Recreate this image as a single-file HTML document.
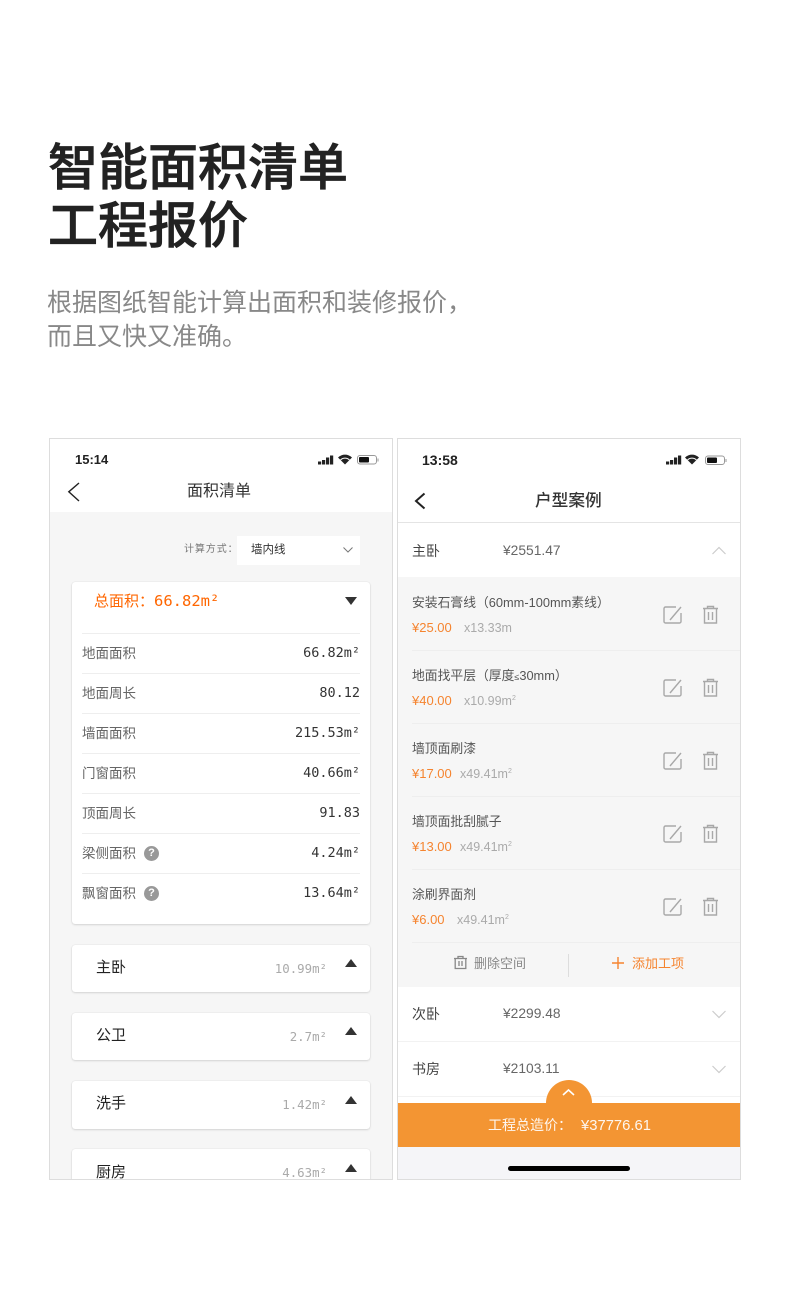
<!DOCTYPE html>
<html lang="zh"><head><meta charset="utf-8"><title>智能面积清单</title>
<style>
html,body{margin:0;padding:0;background:#fff}
body{position:relative;width:790px;height:1290px;overflow:hidden;font-family:"Liberation Sans","Noto Sans CJK SC",sans-serif}
.a,.t,.r,svg,.l{position:absolute}
.t{white-space:nowrap;height:20px;line-height:20px;margin-top:-10px}
.r{white-space:nowrap;height:20px;line-height:20px;margin-top:-10px;text-align:right}
.m{font-family:"DejaVu Sans Mono","Noto Sans CJK SC",monospace}
.c{background:#fff;border-radius:3px;box-shadow:0 1px 2px rgba(0,0,0,.12),0 0 1px rgba(0,0,0,.16);left:72px;width:298px}
.l{height:1px;background:#eee}
.lab{left:82px;font-size:13.5px;color:#666;margin-top:-9px}
.val{right:430px;font-size:13.5px;color:#333}
.nm{left:96px;font-size:15px;color:#222}
.rv{right:463px;font-size:12.4px;color:#aaa}
.n2{left:412px;font-size:14px;color:#444}
.p2{left:503px;font-size:13.8px;color:#666}
.i2{left:412px;font-size:12.8px;color:#555;margin-top:-9px}
.o2{left:412px;font-size:13px;color:#f5842f}
.q2{font-size:12.5px;color:#aaa}
.ic{left:662px;fill:none;stroke:#a8a8a8;stroke-width:1.400}
sup{font-size:7px;line-height:0}
</style></head><body>
<div class="a" style="left:48px;top:139px;font-size:50px;line-height:58px;font-weight:500;-webkit-text-stroke:.7px #222;color:#222;white-space:nowrap">智能面积清单<br>工程报价</div>
<div class="a" style="left:47px;top:286px;font-size:25px;line-height:34px;color:#888;white-space:nowrap">根据图纸智能计算出面积和装修报价，<br>而且又快又准确。</div>

<!-- left phone -->
<div class="a" style="left:49px;top:438px;width:342px;height:740px;border:1px solid #ddd;background:#f6f6f6;overflow:hidden"></div>
<div class="a" style="left:50px;top:439px;width:342px;height:73px;background:#fff"></div>
<div class="t" style="left:75px;top:460px;font-size:13px;font-weight:700;color:#222">15:14</div>
<svg style="left:318px;top:454px" width="18" height="12"><path fill="#222" d="M0 7.500h3.200v3H0zM4 6h3.200v4.500H4zM8 3.500h3.200v7H8zM12 1.500h3.200v9H12z"/></svg>
<svg style="left:338px;top:454px" width="15" height="12"><path fill="#222" d="M7 10.500 0 3.500C4-.4 10-.4 14 3.500z"/><path fill="none" stroke="#fff" stroke-width="1" d="M2.500 6c2.500-2.500 6.500-2.500 9 0"/></svg>
<svg style="left:357px;top:454px" width="23" height="12"><rect x=".5" y="1.500" width="19" height="8.500" rx="2.500" fill="none" stroke="#999"/><rect x="2" y="3" width="10" height="5.500" rx="1" fill="#111"/><rect x="20.500" y="4.500" width="1" height="3" fill="#999"/></svg>
<svg style="left:66px;top:481px" width="16" height="22" fill="none" stroke="#222" stroke-width="1.400"><path d="M13 2 2.800 10.800 13 20"/></svg>
<div class="t" style="left:187px;top:492px;font-size:16px;color:#333">面积清单</div>

<div class="t" style="left:184px;top:550px;font-size:10px;color:#777;letter-spacing:.9px">计算方式：</div>
<div class="a" style="left:237px;top:536px;width:123px;height:29px;background:#fff"></div>
<div class="t" style="left:251px;top:550px;font-size:11.500px;color:#333">墙内线</div>
<svg style="left:342px;top:546px" width="12" height="8" fill="none" stroke="#777"><path d="M1.500 1.500 6 6l4.500-4.500"/></svg>

<div class="a c" style="top:582px;height:342px"></div>
<div class="t m" style="left:94px;top:601px;color:#f60"><span style="font-size:15px">总面积：</span><span style="font-size:15.500px">66.82m²</span></div>
<svg style="left:345px;top:597px" width="12" height="8"><path fill="#333" d="M0 0h12L6 8z"/></svg>
<div class="l" style="left:82px;top:633px;width:278px"></div>
<div class="l" style="left:82px;top:673px;width:278px"></div>
<div class="l" style="left:82px;top:713px;width:278px"></div>
<div class="l" style="left:82px;top:753px;width:278px"></div>
<div class="l" style="left:82px;top:793px;width:278px"></div>
<div class="l" style="left:82px;top:833px;width:278px"></div>
<div class="l" style="left:82px;top:873px;width:278px"></div>
<div class="t lab" style="top:653px">地面面积</div><div class="r m val" style="top:653px">66.82m²</div>
<div class="t lab" style="top:693px">地面周长</div><div class="r m val" style="top:693px">80.12</div>
<div class="t lab" style="top:733px">墙面面积</div><div class="r m val" style="top:733px">215.53m²</div>
<div class="t lab" style="top:773px">门窗面积</div><div class="r m val" style="top:773px">40.66m²</div>
<div class="t lab" style="top:813px">顶面周长</div><div class="r m val" style="top:813px">91.83</div>
<div class="t lab" style="top:853px">梁侧面积</div><div class="r m val" style="top:853px">4.24m²</div>
<div class="t lab" style="top:893px">飘窗面积</div><div class="r m val" style="top:893px">13.64m²</div>
<div class="a" style="left:144px;top:846px;width:15px;height:15px;border-radius:50%;background:#999;color:#fff;font-size:11px;font-weight:700;line-height:15px;text-align:center">?</div>
<div class="a" style="left:144px;top:886px;width:15px;height:15px;border-radius:50%;background:#999;color:#fff;font-size:11px;font-weight:700;line-height:15px;text-align:center">?</div>

<div class="a c" style="top:945px;height:47px"></div>
<div class="t nm" style="top:968px">主卧</div><div class="r m rv" style="top:969px">10.99m²</div>
<svg style="left:345px;top:959px" width="12" height="8"><path fill="#333" d="M6 0l6 8H0z"/></svg>
<div class="a c" style="top:1013px;height:47px"></div>
<div class="t nm" style="top:1036px">公卫</div><div class="r m rv" style="top:1037px">2.7m²</div>
<svg style="left:345px;top:1027px" width="12" height="8"><path fill="#333" d="M6 0l6 8H0z"/></svg>
<div class="a c" style="top:1081px;height:48px"></div>
<div class="t nm" style="top:1104px">洗手</div><div class="r m rv" style="top:1105px">1.42m²</div>
<svg style="left:345px;top:1096px" width="12" height="8"><path fill="#333" d="M6 0l6 8H0z"/></svg>
<div class="a" style="left:50px;top:1140px;width:342px;height:39px;overflow:hidden">
<div class="a c" style="left:22px;top:9px;height:48px"></div>
<div class="t nm" style="left:46px;top:33px">厨房</div><div class="r m rv" style="right:65px;top:33px">4.63m²</div>
<svg style="left:295px;top:24px" width="12" height="8"><path fill="#333" d="M6 0l6 8H0z"/></svg>
</div>

<!-- right phone -->
<div class="a" style="left:397px;top:438px;width:342px;height:740px;border:1px solid #ddd;background:#fff"></div>
<div class="t" style="left:422px;top:460px;font-size:14px;font-weight:700;color:#222">13:58</div>
<svg style="left:666px;top:454px" width="18" height="12"><path fill="#222" d="M0 7.500h3.200v3H0zM4 6h3.200v4.500H4zM8 3.500h3.200v7H8zM12 1.500h3.200v9H12z"/></svg>
<svg style="left:685px;top:454px" width="15" height="12"><path fill="#222" d="M7 10.500 0 3.500C4-.4 10-.4 14 3.500z"/><path fill="none" stroke="#fff" stroke-width="1" d="M2.500 6c2.500-2.500 6.500-2.500 9 0"/></svg>
<svg style="left:704px;top:454px" width="24" height="12"><rect x="1.500" y="2" width="19" height="8.500" rx="2.500" fill="none" stroke="#999"/><rect x="3" y="3.500" width="10" height="5.500" rx="1" fill="#111"/><rect x="21.500" y="5" width="1" height="3" fill="#999"/></svg>
<svg style="left:412px;top:491px" width="16" height="20" fill="none" stroke="#222" stroke-width="2"><path d="M12.500 2.500 4 10l8.500 7.500"/></svg>
<div class="t" style="left:535px;top:501px;font-size:16.700px;font-weight:500;color:#333">户型案例</div>
<div class="l" style="left:398px;top:522px;width:342px;background:#e4e4e4"></div>
<div class="t n2" style="top:551px">主卧</div><div class="t p2" style="top:551px">¥2551.47</div>
<svg style="left:711px;top:545px" width="16" height="11" fill="none" stroke="#ccc" stroke-width="1.200"><path d="M1.500 9 8 2.500 14.500 9"/></svg>
<div class="a" style="left:398px;top:577px;width:342px;height:410px;background:#f6f6f6"></div>

<div class="t i2" style="top:602px">安装石膏线（60mm-100mm素线）</div>
<div class="t o2" style="top:628px">¥25.00</div><div class="t q2" style="left:464px;top:628px">x13.33m</div>
<div class="l" style="left:412px;top:650px;width:328px"></div>
<div class="t i2" style="top:675px">地面找平层（厚度<span style="font-size:9px">≤</span>30mm）</div>
<div class="t o2" style="top:701px">¥40.00</div><div class="t q2" style="left:464px;top:701px">x10.99m<sup>2</sup></div>
<div class="l" style="left:412px;top:723px;width:328px"></div>
<div class="t i2" style="top:748px">墙顶面刷漆</div>
<div class="t o2" style="top:774px">¥17.00</div><div class="t q2" style="left:460px;top:774px">x49.41m<sup>2</sup></div>
<div class="l" style="left:412px;top:796px;width:328px"></div>
<div class="t i2" style="top:821px">墙顶面批刮腻子</div>
<div class="t o2" style="top:847px">¥13.00</div><div class="t q2" style="left:460px;top:847px">x49.41m<sup>2</sup></div>
<div class="l" style="left:412px;top:869px;width:328px"></div>
<div class="t i2" style="top:894px">涂刷界面剂</div>
<div class="t o2" style="top:920px">¥6.00</div><div class="t q2" style="left:457px;top:920px">x49.41m<sup>2</sup></div>
<div class="l" style="left:412px;top:942px;width:328px"></div>

<svg class="ic" style="top:605px" width="60" height="20"><path d="M14 2H3.500A1.500 1.500 0 0 0 2 3.500v13A1.500 1.500 0 0 0 3.500 18h14a1.500 1.500 0 0 0 1.500-1.500V8M8 15 19 2"/><path d="M41 3.500h15M45.500 3.500V1.500h6v2M42.500 3.500V18h12V3.500M46.500 7v8M50.500 7v8"/></svg>
<svg class="ic" style="top:678px" width="60" height="20"><path d="M14 2H3.500A1.500 1.500 0 0 0 2 3.500v13A1.500 1.500 0 0 0 3.500 18h14a1.500 1.500 0 0 0 1.500-1.500V8M8 15 19 2"/><path d="M41 3.500h15M45.500 3.500V1.500h6v2M42.500 3.500V18h12V3.500M46.500 7v8M50.500 7v8"/></svg>
<svg class="ic" style="top:751px" width="60" height="20"><path d="M14 2H3.500A1.500 1.500 0 0 0 2 3.500v13A1.500 1.500 0 0 0 3.500 18h14a1.500 1.500 0 0 0 1.500-1.500V8M8 15 19 2"/><path d="M41 3.500h15M45.500 3.500V1.500h6v2M42.500 3.500V18h12V3.500M46.500 7v8M50.500 7v8"/></svg>
<svg class="ic" style="top:824px" width="60" height="20"><path d="M14 2H3.500A1.500 1.500 0 0 0 2 3.500v13A1.500 1.500 0 0 0 3.500 18h14a1.500 1.500 0 0 0 1.500-1.500V8M8 15 19 2"/><path d="M41 3.500h15M45.500 3.500V1.500h6v2M42.500 3.500V18h12V3.500M46.500 7v8M50.500 7v8"/></svg>
<svg class="ic" style="top:897px" width="60" height="20"><path d="M14 2H3.500A1.500 1.500 0 0 0 2 3.500v13A1.500 1.500 0 0 0 3.500 18h14a1.500 1.500 0 0 0 1.500-1.500V8M8 15 19 2"/><path d="M41 3.500h15M45.500 3.500V1.500h6v2M42.500 3.500V18h12V3.500M46.500 7v8M50.500 7v8"/></svg>

<svg style="left:453px;top:955px" width="16" height="16" fill="none" stroke="#888" stroke-width="1.300"><path d="M1 3.500h13M5 3.500V1.500h5v2M2.200 3.500v10h10.600v-10M6 6v5M9 6v5"/></svg>
<div class="t" style="left:474px;top:964px;font-size:13px;color:#888">删除空间</div>
<div class="a" style="left:568px;top:954px;width:1px;height:23px;background:#ddd"></div>
<svg style="left:612px;top:957px" width="13" height="13" stroke="#f5842f" stroke-width="1.400"><path d="M6 0v12M0 6h12"/></svg>
<div class="t" style="left:632px;top:964px;font-size:13px;color:#f5842f">添加工项</div>

<div class="t n2" style="top:1014px">次卧</div><div class="t p2" style="top:1014px">¥2299.48</div>
<svg style="left:711px;top:1009px" width="16" height="11" fill="none" stroke="#ccc" stroke-width="1.200"><path d="M1.500 2 8 8.500 14.500 2"/></svg>
<div class="l" style="left:398px;top:1041px;width:342px;background:#f2f2f2"></div>
<div class="t n2" style="top:1069px">书房</div><div class="t p2" style="top:1069px">¥2103.11</div>
<svg style="left:711px;top:1064px" width="16" height="11" fill="none" stroke="#ccc" stroke-width="1.200"><path d="M1.500 2 8 8.500 14.500 2"/></svg>
<div class="l" style="left:398px;top:1096px;width:342px;background:#f2f2f2"></div>
<div class="a" style="left:546px;top:1080px;width:46px;height:46px;border-radius:50%;background:#f39533"></div>
<svg style="left:561px;top:1087px" width="15" height="10" fill="none" stroke="#fff" stroke-width="1.600"><path d="M2 8l5.500-5L13 8"/></svg>
<div class="a" style="left:398px;top:1103px;width:342px;height:44px;background:#f39533"></div>
<div class="t" style="left:488px;top:1125px;font-size:14px;color:#fff;opacity:.92">工程总造价：</div>
<div class="t" style="left:581px;top:1126px;font-size:14.800px;color:#fff;opacity:.92">¥37776.61</div>
<div class="a" style="left:398px;top:1147px;width:342px;height:32px;background:#f5f5f8"></div>
<div class="a" style="left:508px;top:1166px;width:122px;height:5px;border-radius:3px;background:#000"></div>
</body></html>
